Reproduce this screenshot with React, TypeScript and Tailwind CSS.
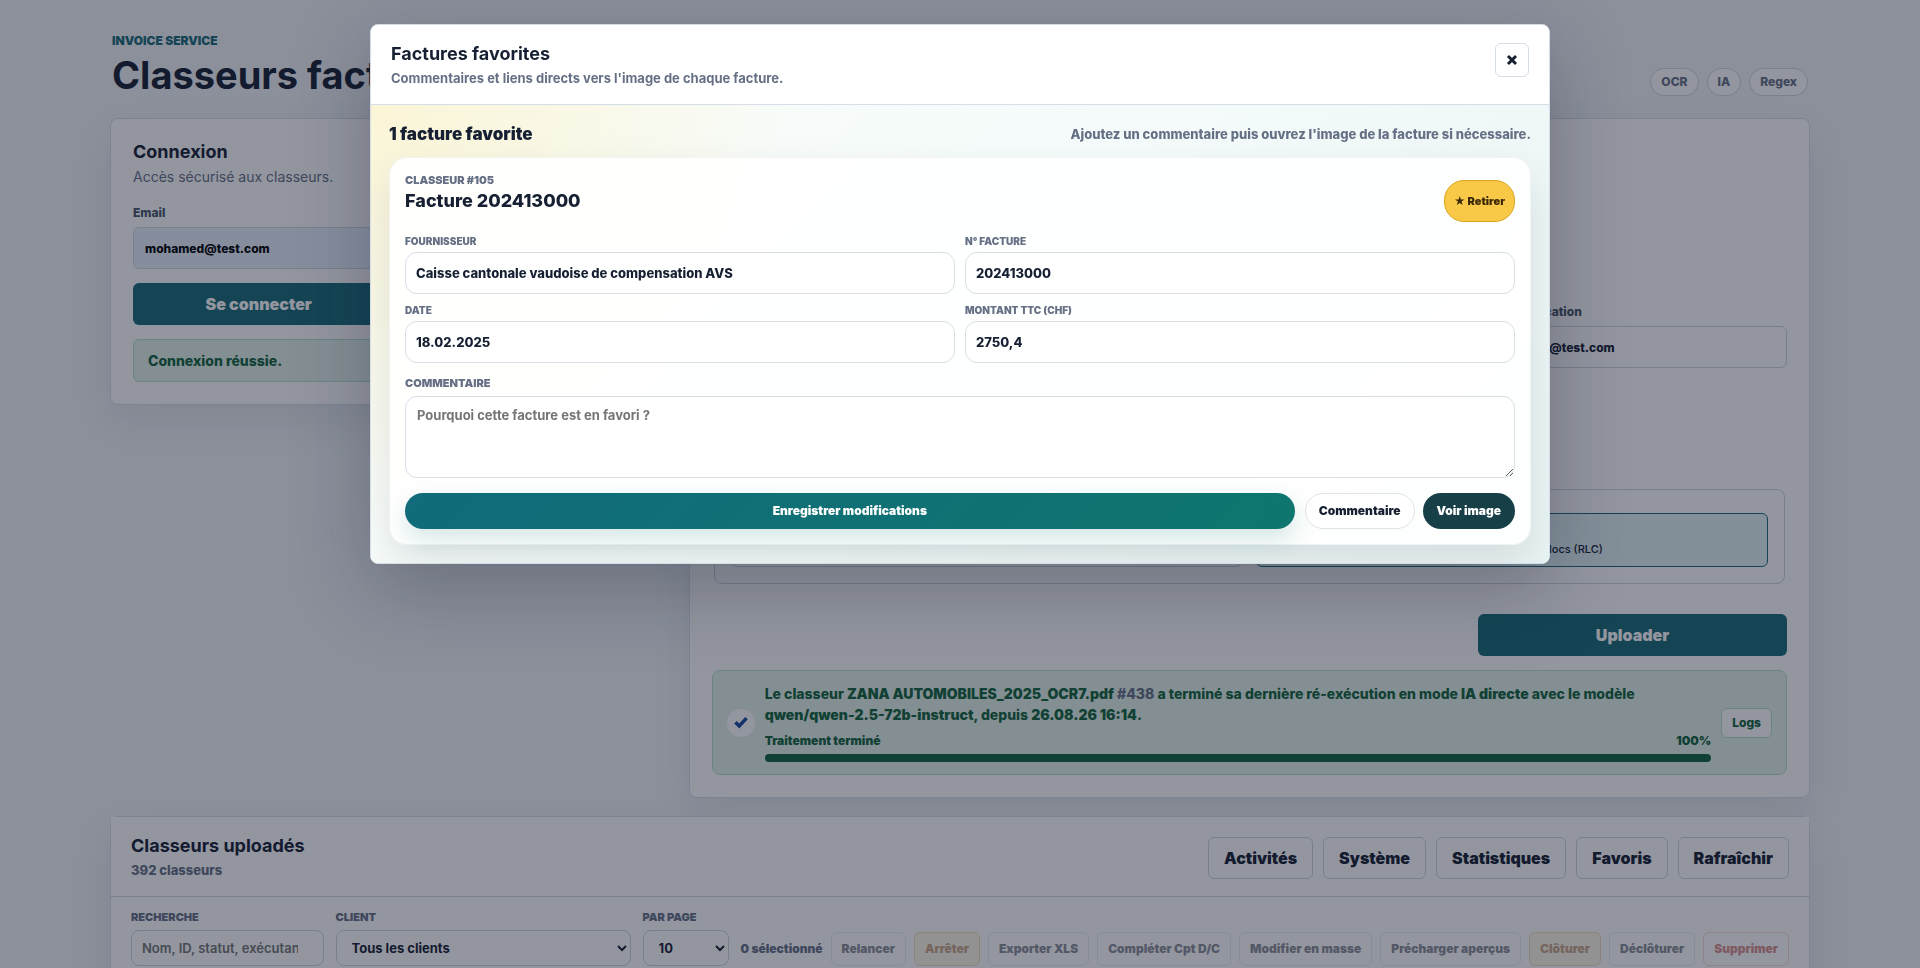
import { useState } from "react";
import type { ReactNode } from "react";

const navButtons = ["Activités", "Système", "Statistiques", "Favoris", "Rafraîchir"];

const bulkActions = [
  { label: "Relancer", tone: "default" },
  { label: "Arrêter", tone: "warning" },
  { label: "Exporter XLS", tone: "default" },
  { label: "Compléter Cpt D/C", tone: "default" },
  { label: "Modifier en masse", tone: "default" },
  { label: "Précharger aperçus", tone: "default" },
  { label: "Clôturer", tone: "warning" },
  { label: "Déclôturer", tone: "default" },
  { label: "Supprimer", tone: "danger" },
];

const toneClasses: Record<string, string> = {
  default: "bg-white border-[#d5dde6] text-[#172033]",
  warning: "bg-[#fff1d6] border-[#e9b872] text-[#92500e]",
  danger: "bg-white border-[#f0b4b0] text-[#b42318]",
};

function Card({ className = "", children }: { className?: string; children?: ReactNode }) {
  return (
    <section
      className={`bg-white border border-[#d5dde6] rounded-lg shadow-[0_16px_40px_rgba(15,23,42,0.08)] ${className}`}
    >
      {children}
    </section>
  );
}

function ModalField({ id, label, defaultValue }: { id: string; label: string; defaultValue: string }) {
  return (
    <div className="flex flex-col gap-1">
      <label htmlFor={id} className="text-[10px] leading-[13px] font-black uppercase text-[#667085]">
        {label}
      </label>
      <input
        id={id}
        type="text"
        defaultValue={defaultValue}
        className="w-full h-[42px] px-2.5 rounded-xl border border-[#d9dee5] bg-white text-[13px] font-extrabold text-[#172033] outline-none"
      />
    </div>
  );
}

function LoginCard() {
  return (
    <Card className="self-start p-[22px]">
      <h2 className="text-lg leading-[22px] font-bold">Connexion</h2>
      <p className="mt-1 text-sm leading-5 text-[#667085]">Accès sécurisé aux classeurs.</p>
      <div className="grid grid-cols-2 gap-x-3 gap-y-[14px] mt-4">
        <div className="flex flex-col gap-1">
          <label htmlFor="email" className="text-xs leading-5 font-extrabold text-[#475467]">
            Email
          </label>
          <input
            id="email"
            type="email"
            defaultValue="mohamed@test.com"
            className="w-full h-[42px] px-[11px] rounded-md border border-[#cdd5df] bg-[#e8f0fe] text-xs font-extrabold text-black outline-none"
          />
        </div>
        <button type="button" className="col-start-1 h-[42px] rounded-md bg-[#1a6b78] text-base font-black text-white">
          Se connecter
        </button>
        <p className="col-span-2 h-[43px] px-[14px] flex items-center rounded-md border border-[#b7dfc8] bg-[#e4f2ea] text-sm font-extrabold text-[#13653c]">
          Connexion réussie.
        </p>
      </div>
    </Card>
  );
}

function UploadCard() {
  return (
    <Card className="flex flex-col p-[22px]">
      <div className="w-[309px] self-end mt-[161px] flex flex-col gap-1">
        <label htmlFor="notification" className="text-xs leading-5 font-extrabold text-[#475467]">
          Email notification
        </label>
        <input
          id="notification"
          type="email"
          defaultValue="mohamed@test.com"
          className="w-full h-[42px] px-[11px] rounded-md border border-[#cdd5df] bg-white text-xs font-extrabold text-[#172033] outline-none"
        />
      </div>

      <div className="mt-[121px] mx-0.5 px-4 pt-[23px] pb-4 rounded-lg border border-[#cdd5df] grid grid-cols-2 gap-[14px]">
        <button type="button" className="h-[54px] rounded-md border border-[#cdd5df] text-[11px]">
          OCR standard
        </button>
        <button
          type="button"
          className="h-[54px] pt-[18px] rounded-md border border-[#1a6b78] bg-[#e2f4f5] text-[11px] font-medium text-[#172033]"
        >
          Reconnaissance ligne, blocs (RLC)
        </button>
      </div>

      <button
        type="button"
        className="self-end w-[309px] mt-[30px] h-[42px] rounded-md bg-[#1a6b78] text-base font-black text-white"
      >
        Uploader
      </button>

      <div className="mt-[14px] px-[14px] py-3 flex items-center gap-2.5 rounded-lg border border-[#b7dfc8] bg-[#e4f2ea] text-[#13653c]">
        <span className="shrink-0 size-7 rounded-full bg-white flex items-center justify-center">
          <svg viewBox="0 0 16 16" className="size-4" fill="#17479e" aria-hidden="true">
            <path d="M1.2 8.5 3.7 6l2.5 2.6L12.3 2l2.5 2.3-8.5 9.3z" />
          </svg>
        </span>
        <div className="flex-1 min-w-0">
          <p className="text-sm leading-[21px] font-extrabold">
            Le classeur <strong className="font-black">ZANA AUTOMOBILES_2025_OCR7.pdf</strong>{" "}
            <span className="text-[#667085]">#438</span> a terminé sa dernière ré-exécution en mode{" "}
            <strong className="font-black">IA directe</strong> avec le modèle
            <br />
            <strong className="font-black">qwen/qwen-2.5-72b-instruct</strong>, depuis{" "}
            <strong className="font-black">26.08.26 16:14</strong>.
          </p>
          <div className="mt-[7px] flex justify-between text-xs leading-[18px] font-black">
            <span>Traitement terminé</span>
            <span>100%</span>
          </div>
          <div className="mt-1 h-2 rounded-full bg-[#13653c]" />
        </div>
        <button
          type="button"
          className="shrink-0 h-[30px] px-2.5 rounded-md border border-[#b7dfc8] bg-white text-xs font-extrabold"
        >
          Logs
        </button>
      </div>
    </Card>
  );
}

function BindersSection() {
  return (
    <Card>
      <div className="px-5 pt-[18px] pb-4 flex items-center justify-between bg-white border-b border-[#cdd5df]">
        <div>
          <h2 className="text-lg leading-[22px] font-bold">Classeurs uploadés</h2>
          <p className="mt-1 text-[13px] leading-[19px] font-extrabold text-[#667085]">392 classeurs</p>
        </div>
        <div className="flex gap-2.5">
          {navButtons.map((label) => (
            <button
              key={label}
              type="button"
              className="h-[42px] px-[15px] rounded-md border border-[#cdd5df] bg-white text-base font-black"
            >
              {label}
            </button>
          ))}
        </div>
      </div>

      <div className="px-5 pt-3 pb-12 flex items-end gap-3">
        <div className="flex-1 min-w-0 flex flex-col gap-1">
          <label htmlFor="search" className="text-[11px] leading-[17px] font-black uppercase text-[#667085]">
            Recherche
          </label>
          <input
            id="search"
            type="search"
            placeholder="Nom, ID, statut, exécutant"
            className="w-full h-9 pl-2.5 pr-3 rounded-lg border border-[#cdd5df] bg-white text-[13px] font-semibold placeholder:text-[#757575] outline-none"
          />
        </div>
        <div className="w-[295px] flex flex-col gap-1">
          <label htmlFor="client" className="text-[11px] leading-[17px] font-black uppercase text-[#667085]">
            Client
          </label>
          <select
            id="client"
            className="w-full h-9 px-[11px] rounded-lg border border-[#cdd5df] bg-white text-[13px] font-bold outline-none"
          >
            <option>Tous les clients</option>
          </select>
        </div>
        <div className="w-[86px] flex flex-col gap-1">
          <label htmlFor="per-page" className="text-[11px] leading-[17px] font-black uppercase text-[#667085]">
            Par page
          </label>
          <select
            id="per-page"
            className="w-full h-9 px-[11px] rounded-lg border border-[#cdd5df] bg-white text-[13px] font-bold outline-none"
          >
            <option>10</option>
          </select>
        </div>
        <div className="flex items-center gap-2">
          <span className="text-xs font-black text-[#667085] whitespace-nowrap">0 sélectionné</span>
          {bulkActions.map(({ label, tone }) => (
            <button
              key={label}
              type="button"
              disabled
              className={`h-[34px] px-2.5 rounded-md border text-xs font-black whitespace-nowrap opacity-50 ${toneClasses[tone]}`}
            >
              {label}
            </button>
          ))}
        </div>
      </div>
    </Card>
  );
}

function FavoritesModal({ onClose }: { onClose: () => void }) {
  const [comment, setComment] = useState("");

  return (
    <div className="fixed inset-0 px-6 py-6 flex items-start justify-center bg-[#0f172a]/45">
      <div
        role="dialog"
        aria-modal="true"
        aria-labelledby="favorites-title"
        className="w-full max-w-[1180px] overflow-hidden rounded-lg border border-[#d5dde6] bg-white shadow-[0_24px_80px_rgba(15,23,42,0.28)]"
      >
        <header className="px-5 pt-[18px] pb-4 flex items-start justify-between border-b border-[#d5dde6]">
          <div>
            <h2 id="favorites-title" className="text-lg leading-[22px] font-bold">
              Factures favorites
            </h2>
            <p className="mt-1 text-[13px] leading-[19px] font-bold text-[#667085]">
              Commentaires et liens directs vers l'image de chaque facture.
            </p>
          </div>
          <button
            type="button"
            aria-label="Fermer"
            onClick={onClose}
            className="size-[34px] flex items-center justify-center rounded-md border border-[#d5dde6] bg-white"
          >
            <svg viewBox="0 0 12 12" className="size-3" stroke="currentColor" strokeWidth="3" aria-hidden="true">
              <path d="M2 2l8 8M10 2l-8 8" />
            </svg>
          </button>
        </header>

        <div className="p-[18px] bg-[radial-gradient(circle_at_top_left,rgba(250,204,21,0.16),transparent_34%),linear-gradient(135deg,#fbfdfb,#f4fbfa_50%,#e9f4f4)]">
          <div className="flex items-center justify-between">
            <h3 className="text-[17px] leading-[22px] font-black">1 facture favorite</h3>
            <p className="text-[13px] leading-[22px] font-extrabold text-[#667085]">
              Ajoutez un commentaire puis ouvrez l'image de la facture si nécessaire.
            </p>
          </div>

          <article className="mt-3 p-[15px] rounded-[18px] border border-[#0f172a]/5 bg-white/90 shadow-[0_18px_42px_rgba(15,23,42,0.10)]">
            <div className="h-[49px] flex justify-between">
              <div>
                <p className="text-[11px] leading-[15px] font-black uppercase text-[#667085]">Classeur #105</p>
                <h4 className="text-lg leading-[26px] font-extrabold">Facture 202413000</h4>
              </div>
              <button
                type="button"
                className="self-end h-[42px] px-[9px] rounded-[20px] border border-[#dba520] bg-[#f8c846] text-[11px] font-black text-[#3b2a05]"
              >
                ★ Retirer
              </button>
            </div>

            <div className="mt-[13px] grid grid-cols-2 gap-2.5">
              <ModalField id="supplier" label="Fournisseur" defaultValue="Caisse cantonale vaudoise de compensation AVS" />
              <ModalField id="number" label="N° facture" defaultValue="202413000" />
              <ModalField id="date" label="Date" defaultValue="18.02.2025" />
              <ModalField id="amount" label="Montant TTC (CHF)" defaultValue="2750,4" />
            </div>

            <div className="mt-3 flex flex-col gap-1">
              <label htmlFor="comment" className="text-[11px] leading-[17px] font-black uppercase text-[#667085]">
                Commentaire
              </label>
              <textarea
                id="comment"
                value={comment}
                onChange={(e) => setComment(e.target.value)}
                placeholder="Pourquoi cette facture est en favori ?"
                className="w-full h-[82px] px-[11px] py-2.5 rounded-xl border border-[#d9dee5] bg-white text-[13px] leading-[17px] font-bold placeholder:text-[#757575] outline-none resize-y"
              />
            </div>

            <div className="mt-[15px] flex gap-2.5">
              <button
                type="button"
                className="flex-1 h-9 rounded-full bg-linear-135 from-[#116b7a] to-[#0f766e] text-xs font-black text-white shadow-[0_10px_24px_rgba(15,118,110,0.18)]"
              >
                Enregistrer modifications
              </button>
              <div className="flex gap-2">
                <button type="button" className="h-9 px-[13px] rounded-full border border-[#dfe3e9] bg-white text-xs font-black">
                  Commentaire
                </button>
                <button type="button" className="h-9 px-[14px] rounded-full bg-[#163f48] text-xs font-black text-white">
                  Voir image
                </button>
              </div>
            </div>
          </article>
        </div>
      </div>
    </div>
  );
}

export default function App() {
  const [showFavorites, setShowFavorites] = useState(true);

  return (
    <div className="h-screen overflow-hidden bg-[#f1f4f7] font-['Inter',sans-serif] text-[#172033]">
      <main className="max-w-[1700px] mx-auto pt-8 flex flex-col gap-[18px]">
        <header className="px-0.5 flex items-end justify-between">
          <div>
            <p className="text-xs leading-[18px] font-black uppercase text-[#1a6b78]">Invoice service</p>
            <h1 className="text-[38px] leading-[50px] font-bold">Classeurs factures</h1>
          </div>
          <div className="mb-1 flex gap-2">
            {["OCR", "IA", "Regex"].map((tag) => (
              <span
                key={tag}
                className="h-7 px-2.5 flex items-center rounded-full border border-[#cdd5df] bg-white text-xs font-extrabold text-[#667085]"
              >
                {tag}
              </span>
            ))}
          </div>
        </header>

        <div className="grid grid-cols-[1fr_2fr] gap-[18px]">
          <LoginCard />
          <UploadCard />
        </div>

        <BindersSection />
      </main>

      {showFavorites && <FavoritesModal onClose={() => setShowFavorites(false)} />}
    </div>
  );
}
